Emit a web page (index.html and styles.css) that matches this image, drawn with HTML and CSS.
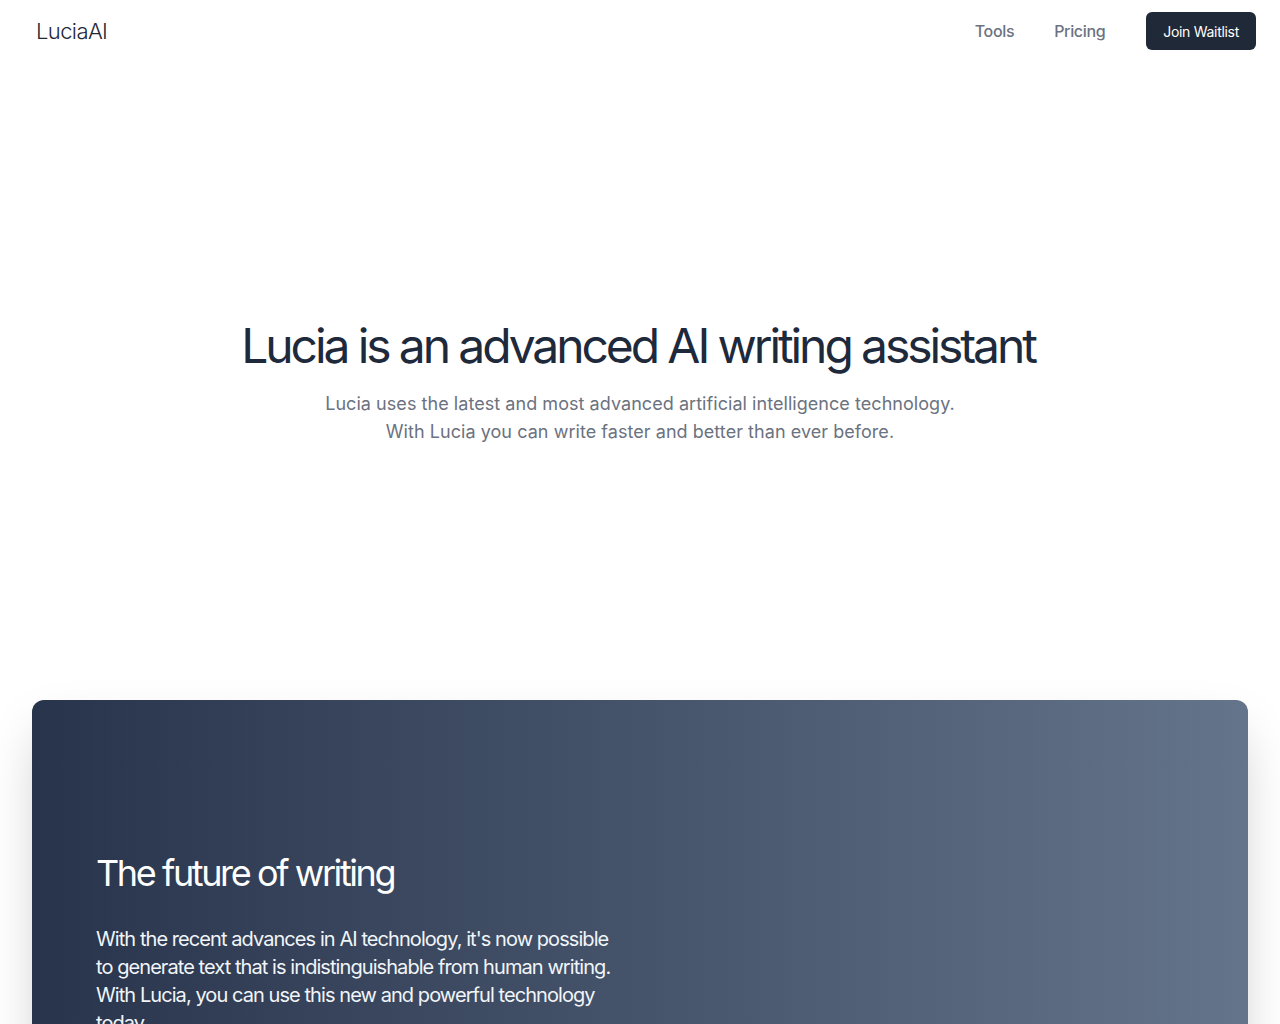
FILE: index.html
```html
<!DOCTYPE html>
<html lang="en">
<head>
<meta charset="utf-8">
<title>LuciaAI</title>
<link rel="stylesheet" href="styles.css">
</head>
<body>
<header class="header">
  <a class="logo" href="#">LuciaAI</a>
  <nav class="nav">
    <a class="nav-link" href="#">Tools</a>
    <a class="nav-link" href="#">Pricing</a>
    <a class="btn" href="#">Join Waitlist</a>
  </nav>
</header>
<main>
  <section class="hero">
    <h1 class="hero-title">Lucia is an advanced AI writing assistant</h1>
    <p class="hero-sub">Lucia uses the latest and most advanced artificial intelligence technology.<br>With Lucia you can write faster and better than ever before.</p>
  </section>
  <section class="feature">
    <div class="feature-card">
      <h2 class="feature-title">The future of writing</h2>
      <p class="feature-text">With the recent advances in AI technology, it's now possible to generate text that is indistinguishable from human writing. With Lucia, you can use this new and powerful technology today.</p>
    </div>
  </section>
</main>
</body>
</html>
```
FILE: styles.css
```css
* { box-sizing: border-box; }
html, body { margin: 0; padding: 0; }
body {
  font-family: Inter, "Noto Sans", sans-serif;
  background: #ffffff;
  color: #1e293b;
}
a { text-decoration: none; }
.header {
  display: flex;
  align-items: center;
  justify-content: space-between;
  height: 62px;
  padding: 0 24px 0 36px;
}
.logo {
  font-size: 22px;
  font-weight: 300;
  color: #1f2937;
  letter-spacing: -0.6px;
}
.nav {
  display: flex;
  align-items: center;
}
.nav-link {
  font-size: 16px;
  font-weight: 500;
  color: #6b7280;
  margin-right: 40px;
  letter-spacing: -0.35px;
}
.nav-link:nth-child(2) { margin-right: 41px; }
.btn {
  display: inline-flex;
  align-items: center;
  height: 38px;
  padding: 0 17px;
  background: #1f2937;
  color: #ffffff;
  font-size: 14px;
  font-weight: 400;
  border-radius: 6px;
  letter-spacing: -0.3px;
}
.hero {
  text-align: center;
  padding-top: 260px;
  padding-bottom: 254px;
}
.hero-title {
  margin: 0;
  padding-right: 4px;
  font-size: 48px;
  line-height: 48px;
  font-weight: 400;
  color: #1e293b;
  letter-spacing: -3.1px;
}
.hero-sub {
  margin: 20px 0 0;
  font-size: 18px;
  line-height: 28px;
  color: #6b7280;
  font-weight: 400;
  letter-spacing: 0.05px;
}
.feature {
  padding: 0 32px;
}
.feature-card {
  border-radius: 12px;
  background: linear-gradient(to right, #28344b, #64748b);
  box-shadow: 0 25px 50px -12px rgba(0,0,0,0.25);
  padding: 153px 64px 120px;
  color: #ffffff;
}
.feature-title {
  margin: 0;
  font-size: 36px;
  line-height: 40px;
  font-weight: 400;
  letter-spacing: -2.4px;
}
.feature-text {
  margin: 32px 0 0;
  max-width: 530px;
  font-size: 20px;
  line-height: 28px;
  color: #f1f5f9;
  letter-spacing: -0.93px;
}
```
